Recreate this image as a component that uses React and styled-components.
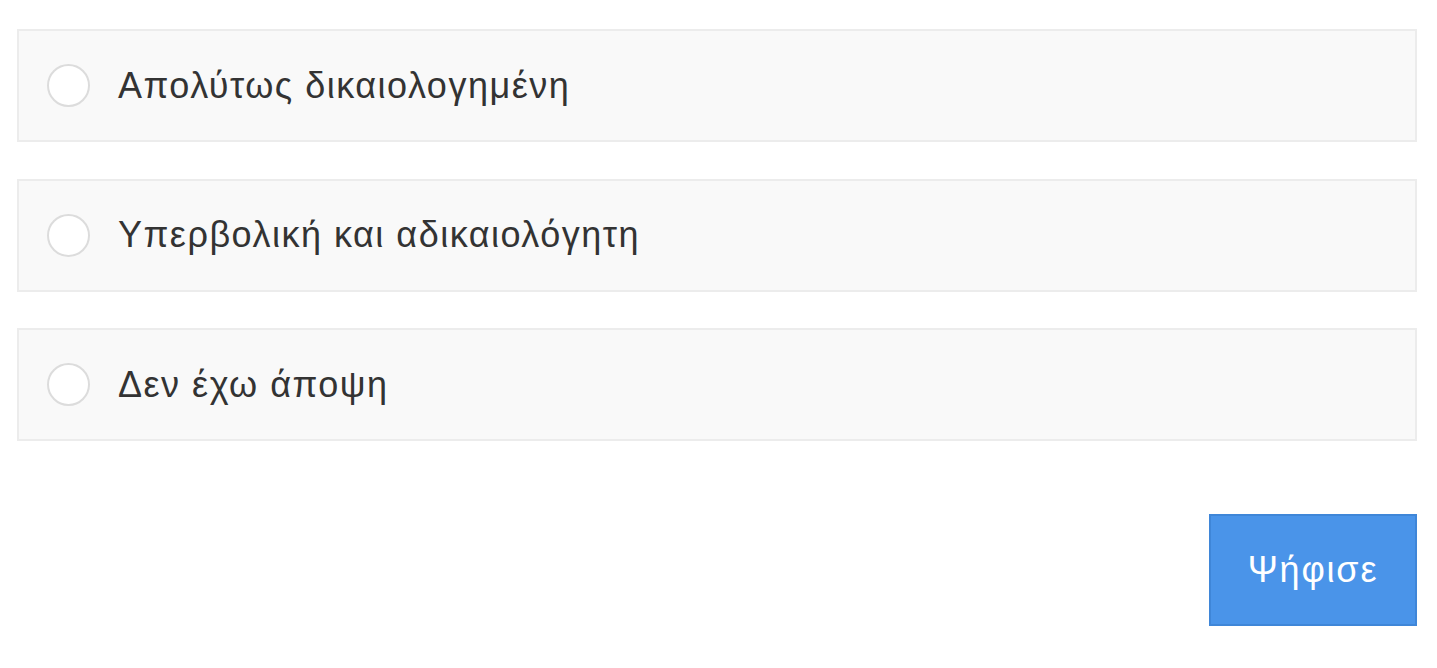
import styled, { createGlobalStyle } from "styled-components";

const GlobalStyle = createGlobalStyle`
  html, body {
    margin: 0;
    padding: 0;
    background: #ffffff;
  }
  body {
    font-family: "Liberation Sans", Arial, sans-serif;
  }
`;

const Poll = styled.form`
  width: 1400px;
  padding: 29px 0 0 17px;
  display: flex;
  flex-direction: column;
  gap: 36.5px;
`;

const Option = styled.label`
  box-sizing: border-box;
  height: 113px;
  display: flex;
  align-items: center;
  gap: 28px;
  padding: 0 28px;
  background: #f9f9f9;
  border: 2px solid #ececec;
  cursor: pointer;
`;

const Radio = styled.span`
  box-sizing: border-box;
  width: 43px;
  height: 43px;
  border-radius: 50%;
  background: #ffffff;
  border: 2px solid #dcdcdc;
  flex-shrink: 0;
`;

const OptionText = styled.span`
  font-size: 36px;
  color: #333333;
  letter-spacing: 1.5px;
`;

const Actions = styled.div`
  display: flex;
  justify-content: flex-end;
  margin-top: 36px;
`;

const VoteButton = styled.button`
  box-sizing: border-box;
  width: 208px;
  height: 112px;
  background: #4a94e9;
  border: 2px solid #3f86d8;
  color: #ffffff;
  font-family: "Liberation Sans", Arial, sans-serif;
  font-size: 36px;
  letter-spacing: 1.8px;
  cursor: pointer;
`;

const options = [
  "Απολύτως δικαιολογημένη",
  "Υπερβολική και αδικαιολόγητη",
  "Δεν έχω άποψη",
];

export default function App() {
  return (
    <>
      <GlobalStyle />
      <Poll onSubmit={(e) => e.preventDefault()}>
        {options.map((o) => (
          <Option key={o}>
            <Radio />
            <OptionText>{o}</OptionText>
          </Option>
        ))}
        <Actions>
          <VoteButton type="submit">Ψήφισε</VoteButton>
        </Actions>
      </Poll>
    </>
  );
}
